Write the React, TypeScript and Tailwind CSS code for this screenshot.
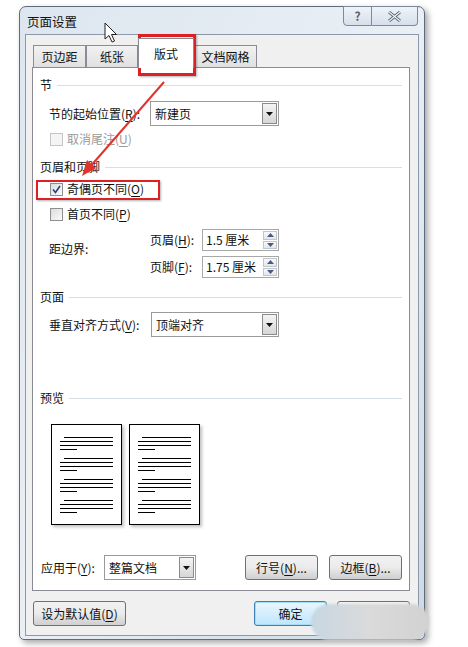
import type { ReactNode } from "react";

const font = { fontFamily: '"Noto Sans CJK SC", "Noto Sans", sans-serif' };

function Key({ k }: { k: string }) {
  return <span className="underline underline-offset-2">{k}</span>;
}

function Header({ title }: { title: string }) {
  return (
    <div className="flex h-[16px] items-center gap-[5px]">
      <span className="leading-none">{title}</span>
      <div className="h-px flex-1 bg-[#d5dfe5]" />
    </div>
  );
}

function Checkbox({ checked, disabled, children }: { checked?: boolean; disabled?: boolean; children: ReactNode }) {
  return (
    <div className={`ml-[10px] flex h-[16px] items-center gap-[4px] ${disabled ? "text-[#9a9a9a]" : ""}`}>
      <div
        className={`flex h-[13px] w-[13px] items-center justify-center border ${
          disabled ? "border-[#c5c5c5] bg-[#f4f4f4]" : "border-[#8f8f8f] bg-gradient-to-br from-[#dcdcdc] to-[#fbfbfb]"
        }`}
      >
        {checked && (
          <svg width="9" height="9" viewBox="0 0 9 9">
            <path d="M1 4.5 L3.5 7.5 L8 1" fill="none" stroke="#2a3f7a" strokeWidth="1.6" />
          </svg>
        )}
      </div>
      <span className="leading-none">{children}</span>
    </div>
  );
}

function Select({ value, width }: { value: string; width: string }) {
  return (
    <div className={`flex h-[25px] ${width} items-center border border-[#9a9a9a] bg-white`}>
      <span className="flex-1 pl-[4px] leading-none">{value}</span>
      <div className="mr-px flex h-[21px] w-[15px] items-center justify-center border border-[#8a8a8a] bg-gradient-to-b from-[#f4f4f4] to-[#d6d6d6]">
        <svg width="7" height="4" viewBox="0 0 7 4">
          <path d="M0 0 H7 L3.5 4 Z" fill="#111" />
        </svg>
      </div>
    </div>
  );
}

function Spinner({ value }: { value: string }) {
  return (
    <div className="flex h-[22px] w-[77px] items-center border border-[#a8a8a8] bg-white">
      <span className="flex-1 pl-[3px] leading-none">{value}</span>
      <div className="flex h-full w-[15px] flex-col gap-px py-px pr-px">
        {[0, 1].map((i) => (
          <div key={i} className="flex flex-1 items-center justify-center border border-[#c2c6cc] bg-gradient-to-b from-[#fafafa] to-[#e3e6ea]">
            <svg width="7" height="4" viewBox="0 0 7 4">
              <path d={i === 0 ? "M0 4 H7 L3.5 0 Z" : "M0 0 H7 L3.5 4 Z"} fill="#4a5a80" />
            </svg>
          </div>
        ))}
      </div>
    </div>
  );
}

function Button({ children, width, focus }: { children: ReactNode; width: string; focus?: boolean }) {
  return (
    <div
      className={`flex h-[25px] ${width} items-center justify-center rounded-[3px] border ${
        focus
          ? "border-[#3c7fb1] bg-gradient-to-b from-[#eaf6fd] to-[#bee6fd] shadow-[inset_0_0_0_1px_#a8dbf5]"
          : "border-[#707070] bg-gradient-to-b from-[#f2f2f2] via-[#ebebeb] to-[#cfcfcf]"
      }`}
    >
      <span className="leading-none">{children}</span>
    </div>
  );
}

function Page() {
  return (
    <div className="flex h-[101px] w-[71px] flex-col gap-[8px] border border-black bg-white px-[8px] pt-[12px] shadow-[2px_2px_3px_rgba(0,0,0,0.25)]">
      {[0, 1, 2, 3].map((g) => (
        <div key={g} className="flex flex-col gap-[3px]">
          <div className="ml-[4px] h-px bg-black" />
          <div className="h-px bg-black" />
          <div className="h-px bg-black" />
          <div className="h-px w-[17px] bg-black" />
        </div>
      ))}
    </div>
  );
}

function Tab({ label, width, selected }: { label: string; width: string; selected?: boolean }) {
  return (
    <div
      className={`flex ${width} items-center justify-center border border-b-0 border-[#898c95] ${
        selected ? "z-10 -mb-px h-[30px] bg-white" : "h-[22px] bg-gradient-to-b from-[#f2f2f2] to-[#e0e0e0]"
      }`}
    >
      <span className="leading-none">{label}</span>
    </div>
  );
}

export default function App() {
  return (
    <div className="relative h-[647px] w-[468px] overflow-hidden bg-white text-[12px] text-[#111]" style={font}>
      <div className="ml-[19px] mt-[6px] flex h-[634px] w-[406px] flex-col rounded-t-[7px] rounded-b-[5px] border border-[#5d6b7c] bg-gradient-to-br from-[#dde6ef] via-[#e9eff5] to-[#cdd9e5] shadow-[3px_3px_6px_rgba(0,0,0,0.35)]">
        {/* title bar */}
        <div className="flex h-[28px] items-start">
          <span className="pl-[7px] pt-[9px] text-[12.5px] leading-none">页面设置</span>
          <div className="ml-auto mr-[6px] -mt-px flex h-[20px]">
            <div className="flex w-[29px] items-center justify-center rounded-bl-[4px] border border-[#7d8a9a] bg-gradient-to-b from-[#eef3f8] to-[#d7e0ea] text-[12px] font-bold text-[#59626e]">
              ?
            </div>
            <div className="flex w-[46px] items-center justify-center rounded-br-[4px] border border-l-0 border-[#7d8a9a] bg-gradient-to-b from-[#eef3f8] to-[#d7e0ea]">
              <svg width="13" height="11" viewBox="0 0 13 11">
                <path d="M1 1 L12 10 M12 1 L1 10" stroke="#5e6671" strokeWidth="3" />
                <path d="M1 1 L12 10 M12 1 L1 10" stroke="#eef2f6" strokeWidth="1.2" />
              </svg>
            </div>
          </div>
        </div>

        {/* client */}
        <div className="mx-[5px] mb-[3px] flex flex-1 flex-col border border-[#8b99aa] bg-[#f0f0f0] pb-[9px] pl-[6px] pr-[8px]">
          <div className="flex h-[32px] items-end pl-px">
            <Tab label="页边距" width="w-[53px]" />
            <Tab label="纸张" width="w-[52px]" />
            <Tab label="版式" width="w-[56px]" selected />
            <Tab label="文档网格" width="w-[63px]" />
          </div>

          <div className="flex h-[524px] flex-col border border-[#898c95] bg-white px-[7px] pb-[10px]">
            <div className="mt-[9px]">
              <Header title="节" />
            </div>
            <div className="ml-[9px] mt-[8px] flex items-center">
              <span className="w-[101px] leading-none">
                节的起始位置(<Key k="R" />):
              </span>
              <Select value="新建页" width="w-[129px]" />
            </div>
            <div className="mt-[5px]">
              <Checkbox disabled>
                取消尾注(<Key k="U" />)
              </Checkbox>
            </div>
            <div className="mt-[12px]">
              <Header title="页眉和页脚" />
            </div>
            <div className="mt-[6px]">
              <Checkbox checked>
                奇偶页不同(<Key k="O" />)
              </Checkbox>
            </div>
            <div className="mt-[9px]">
              <Checkbox>
                首页不同(<Key k="P" />)
              </Checkbox>
            </div>
            <div className="ml-[9px] mt-[7px] flex">
              <span className="w-[101px] pt-[14px] leading-none">距边界:</span>
              <div className="flex flex-col gap-[5px]">
                <div className="flex items-center">
                  <span className="w-[52px] leading-none">
                    页眉(<Key k="H" />):
                  </span>
                  <Spinner value="1.5 厘米" />
                </div>
                <div className="flex items-center">
                  <span className="w-[52px] leading-none">
                    页脚(<Key k="F" />):
                  </span>
                  <Spinner value="1.75 厘米" />
                </div>
              </div>
            </div>
            <div className="mt-[11px]">
              <Header title="页面" />
            </div>
            <div className="ml-[9px] mt-[7px] flex items-center">
              <span className="w-[102px] leading-none">
                垂直对齐方式(<Key k="V" />):
              </span>
              <Select value="顶端对齐" width="w-[128px]" />
            </div>
            <div className="mt-[53px]">
              <Header title="预览" />
            </div>
            <div className="ml-[11px] mt-[18px] flex gap-[7px]">
              <Page />
              <Page />
            </div>
            <div className="mt-auto flex items-center pl-px">
              <span className="w-[63px] leading-none">
                应用于(<Key k="Y" />):
              </span>
              <Select value="整篇文档" width="w-[92px]" />
              <div className="ml-auto flex gap-[11px]">
                <Button width="w-[73px]">
                  行号(<Key k="N" />)...
                </Button>
                <Button width="w-[73px]">
                  边框(<Key k="B" />)...
                </Button>
              </div>
            </div>
          </div>

          <div className="mt-[10px] flex items-center pl-px">
            <Button width="w-[93px]">
              设为默认值(<Key k="D" />)
            </Button>
            <div className="ml-auto flex gap-[10px]">
              <Button width="w-[73px]" focus>
                确定
              </Button>
              <Button width="w-[73px]">取消</Button>
            </div>
          </div>
        </div>
      </div>

      {/* annotations */}
      <div className="absolute left-[138px] top-[34px] h-[42px] w-[58px] border-[3px] border-[#dd1f26] shadow-[1px_1px_2px_rgba(0,0,0,0.3)]" />
      <div className="absolute left-[36px] top-[180px] h-[20px] w-[124px] border-[2px] border-[#dd1f26] shadow-[1px_1px_2px_rgba(0,0,0,0.3)]" />
      <svg className="absolute left-0 top-0" width="468" height="647">
        <path d="M164 82 L89 168" stroke="#e0332f" strokeWidth="2" />
        <path d="M82 176 L87 160 L96 168 Z" fill="#e0332f" />
        <path
          d="M105 23 L105 39 L109 35.5 L112 42 L114.5 41 L111.5 34.5 L116.5 34.5 Z"
          fill="#fff"
          stroke="#222"
          strokeWidth="1"
          strokeLinejoin="round"
        />
      </svg>
      <div className="absolute left-[311px] top-[604px] h-[36px] w-[118px] rounded-[18px] bg-gradient-to-r from-[#c7d8e2] via-[#dadada] to-[#d2d2d2] blur-[1px]" />
    </div>
  );
}
